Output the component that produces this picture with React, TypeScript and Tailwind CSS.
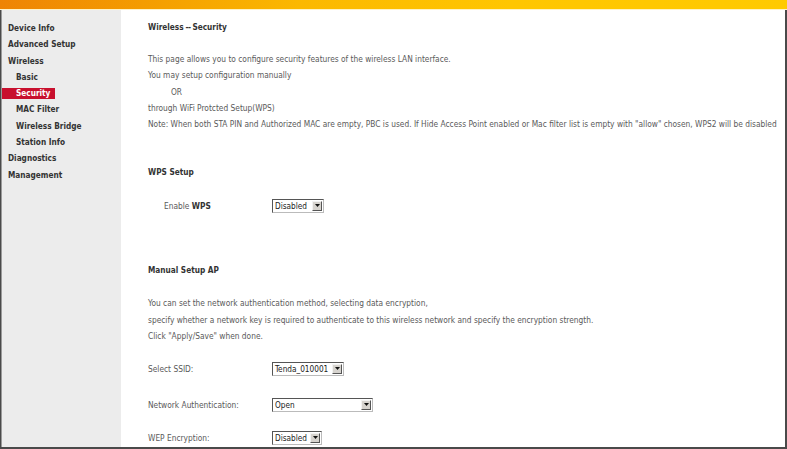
import React from "react";

const font = { fontFamily: '"DejaVu Sans Condensed", "DejaVu Sans", sans-serif' };

function Select({ value, width }: { value: string; width: number }) {
  return (
    <div
      className="flex h-[14px] items-center border border-[#555] border-r-[#bbb] border-b-[#bbb] bg-white"
      style={{ width }}
    >
      <span className="flex-1 pl-[2px] text-[8.2px] leading-[12px] text-[#222]">{value}</span>
      <span className="mr-[1px] flex h-[10px] w-[10px] items-center justify-center border border-t-[#f2f2f2] border-l-[#f2f2f2] border-r-[#555] border-b-[#555] bg-[#d6d3ce]">
        <svg width="5" height="3" viewBox="0 0 5 3">
          <path d="M0 0H5L2.5 3Z" fill="#111" />
        </svg>
      </span>
    </div>
  );
}

function NavItem({ label, sub, active }: { label: string; sub?: boolean; active?: boolean }) {
  if (active) {
    return (
      <div className="flex h-[16.3px] items-center">
        <span className="flex h-[11px] w-[53px] items-center bg-[#c8102e] pl-[14px] text-white">{label}</span>
      </div>
    );
  }
  return (
    <div className={`flex h-[16.3px] items-center ${sub ? "pl-[14px]" : "pl-[6px]"}`}>{label}</div>
  );
}

export default function App() {
  return (
    <div className="flex h-[449px] w-[787px] flex-col overflow-hidden bg-white" style={font}>
      <div className="h-[9px] w-full bg-[linear-gradient(90deg,#ee8404_0%,#f49c00_18%,#fbb800_38%,#ffc600_65%,#ffca00_100%)]" />
      <div className="h-[1px] w-full bg-[#fff3c8]" />
      <div className="flex min-h-0 flex-1 border-r-2 border-b-2 border-l border-[#4a4a4a]">
        <div className="w-[120px] shrink-0 border-l border-[#9a9a9a] bg-[#ececec] pt-[10px] text-[8.2px] font-bold text-[#333]">
          <NavItem label="Device Info" />
          <NavItem label="Advanced Setup" />
          <NavItem label="Wireless" />
          <NavItem label="Basic" sub />
          <NavItem label="Security" active />
          <NavItem label="MAC Filter" sub />
          <NavItem label="Wireless Bridge" sub />
          <NavItem label="Station Info" sub />
          <NavItem label="Diagnostics" />
          <NavItem label="Management" />
        </div>
        <div className="flex-1 pl-[27px] pt-[9px] text-[8.3px] text-[#5a5a5a]">
          <div className="flex h-[16px] items-center whitespace-pre font-bold text-[8.2px] text-[#333]">
            Wireless<span className="tracking-[-0.6px]">{" -- "}</span>Security
          </div>
          <div className="mt-[16px]">
            <div className="flex h-[16.3px] items-center">This page allows you to configure security features of the wireless LAN interface.</div>
            <div className="flex h-[16.3px] items-center">You may setup configuration manually</div>
            <div className="flex h-[16.3px] items-center pl-[23px]">OR</div>
            <div className="flex h-[16.3px] items-center">through WiFi Protcted Setup(WPS)</div>
            <div className="flex h-[16.3px] items-center whitespace-nowrap">Note: When both STA PIN and Authorized MAC are empty, PBC is used. If Hide Access Point enabled or Mac filter list is empty with "allow" chosen, WPS2 will be disabled</div>
          </div>
          <div className="mt-[31.5px] flex h-[16px] items-center font-bold text-[8.2px] text-[#333]">WPS Setup</div>
          <div className="mt-[18px] flex h-[16px] items-center">
            <span className="w-[124px] pl-[16px]">
              Enable <b className="text-[#333]">WPS</b>
            </span>
            <Select value="Disabled" width={52} />
          </div>
          <div className="mt-[48px] flex h-[16px] items-center font-bold text-[8.2px] text-[#333]">Manual Setup AP</div>
          <div className="mt-[17px]">
            <div className="flex h-[16.5px] items-center">You can set the network authentication method, selecting data encryption,</div>
            <div className="flex h-[16.5px] items-center">specify whether a network key is required to authenticate to this wireless network and specify the encryption strength.</div>
            <div className="flex h-[16.5px] items-center">Click "Apply/Save" when done.</div>
          </div>
          <div className="mt-[16.5px] flex h-[16px] items-center">
            <span className="w-[124px]">Select SSID:</span>
            <Select value="Tenda_010001" width={72} />
          </div>
          <div className="mt-[20px] flex h-[16px] items-center">
            <span className="w-[124px]">Network Authentication:</span>
            <Select value="Open" width={101} />
          </div>
          <div className="mt-[17px] flex h-[16px] items-center">
            <span className="w-[124px]">WEP Encryption:</span>
            <Select value="Disabled" width={50} />
          </div>
        </div>
      </div>
    </div>
  );
}
